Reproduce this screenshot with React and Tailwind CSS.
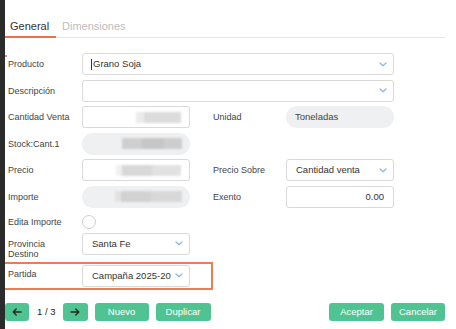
import React from "react";

const font = { fontFamily: '"Liberation Sans", Arial, sans-serif' };

function Chevron() {
  return (
    <svg width="8" height="5" viewBox="0 0 8 5" className="shrink-0">
      <path d="M1 1 L4 3.8 L7 1" fill="none" stroke="#8db4e2" strokeWidth="1.2" strokeLinecap="round" strokeLinejoin="round" />
    </svg>
  );
}

function Blur({ segs }) {
  return (
    <div className="flex h-[11px] blur-[0.8px]">
      {segs.map((c, i) => (
        <div key={i} className="h-full" style={{ width: c[0], background: c[1] }} />
      ))}
    </div>
  );
}

function Label({ children }) {
  return <div className="w-[77px] shrink-0 pl-[3px] text-[9px] text-[#444] leading-[10px]">{children}</div>;
}

function RLabel({ children }) {
  return <div className="w-[96px] shrink-0 pl-[23px] text-[9px] text-[#444] leading-[10px]">{children}</div>;
}

export default function App() {
  return (
    <div className="w-[456px] h-[329px] flex bg-white overflow-hidden" style={font}>
      <div className="w-[5px] shrink-0 bg-[#2b2b2b]" />
      <div className="flex-1 flex flex-col">
        {/* tabs */}
        <div className="mt-[16px] w-[440px] h-[22px] flex border-b border-[#e6e6e6]">
          <div className="w-[51px] pl-[5px] pt-[2px] text-[11px] text-[#333] border-b-2 border-[#ef6f4a] -mb-px">General</div>
          <div className="pl-[6px] pt-[2px] text-[11px] text-[#bdbdbd]">Dimensiones</div>
        </div>

        <div className="flex flex-col mt-[15px] relative">
          <div className="absolute left-0 top-[2px] w-[2px] h-[2px] bg-[#e06060] rounded-full" />
          {/* Producto */}
          <div className="flex items-center h-[22px]">
            <Label>Producto</Label>
            <div className="w-[312px] h-[22px] border border-[#d9d9d9] rounded-[3px] flex items-center pl-[8px] pr-[6px] text-[9.5px] text-[#333]">
              <span className="w-px h-[11px] bg-[#333] mr-px" />
              <span className="flex-1">Grano Soja</span>
              <Chevron />
            </div>
          </div>
          {/* Descripcion */}
          <div className="flex items-center h-[22px] mt-[4.6px]">
            <Label>Descripción</Label>
            <div className="w-[312px] h-[22px] border border-[#d9d9d9] rounded-[3px] flex items-center justify-end pr-[6px]">
              <Chevron />
            </div>
          </div>
          {/* Cantidad */}
          <div className="flex items-center h-[22px] mt-[4.6px]">
            <Label>Cantidad Venta</Label>
            <div className="w-[108px] h-[22px] border border-[#d9d9d9] rounded-[3px] flex items-center justify-end pr-[8px]">
              <Blur segs={[[8, "#ececec"], [37, "#dcdcdc"]]} />
            </div>
            <RLabel>Unidad</RLabel>
            <div className="w-[108px] h-[22px] rounded-[11px] bg-[#eff0f2] flex items-center pl-[9px] text-[9.5px] text-[#444]">Toneladas</div>
          </div>
          {/* Stock */}
          <div className="flex items-center h-[22px] mt-[4.6px]">
            <Label>Stock:Cant.1</Label>
            <div className="w-[108px] h-[22px] rounded-[11px] bg-[#eff0f2] flex items-center justify-end pr-[8px]">
              <Blur segs={[[20, "#cfcfcf"], [22, "#c6c6c6"], [18, "#cdcdcd"]]} />
            </div>
          </div>
          {/* Precio */}
          <div className="flex items-center h-[22px] mt-[4.6px]">
            <Label>Precio</Label>
            <div className="w-[108px] h-[22px] border border-[#d9d9d9] rounded-[3px] flex items-center justify-end pr-[8px]">
              <Blur segs={[[6, "#f0f0f0"], [30, "#d8d8d8"], [29, "#e2e2e2"]]} />
            </div>
            <RLabel>Precio Sobre</RLabel>
            <div className="w-[108px] h-[22px] border border-[#d9d9d9] rounded-[3px] flex items-center pl-[9px] pr-[6px] text-[9.5px] text-[#333]">
              <span className="flex-1">Cantidad venta</span>
              <Chevron />
            </div>
          </div>
          {/* Importe */}
          <div className="flex items-center h-[22px] mt-[4.6px]">
            <Label>Importe</Label>
            <div className="w-[108px] h-[22px] rounded-[11px] bg-[#eff0f2] flex items-center justify-end pr-[8px]">
              <Blur segs={[[6, "#e2e2e2"], [30, "#d2d2d2"], [31, "#d8d8d8"]]} />
            </div>
            <RLabel>Exento</RLabel>
            <div className="w-[108px] h-[22px] border border-[#d9d9d9] rounded-[3px] flex items-center justify-end pr-[9px] text-[9.5px] text-[#333]">0.00</div>
          </div>
          {/* Edita Importe */}
          <div className="flex items-center h-[16px] mt-[6px]">
            <Label>Edita Importe</Label>
            <div className="w-[14px] h-[14px] rounded-full border border-[#cfcfcf] bg-white" />
          </div>
          {/* Provincia */}
          <div className="flex items-start h-[22px] mt-[3px]">
            <Label><div className="pt-[6px]">Provincia<br />Destino</div></Label>
            <div className="w-[108px] h-[22px] border border-[#d9d9d9] rounded-[3px] flex items-center pl-[9px] pr-[6px] text-[9.5px] text-[#333]">
              <span className="flex-1">Santa Fe</span>
              <Chevron />
            </div>
          </div>
          {/* Partida */}
          <div className="flex items-center w-[208px] h-[28px] mt-[7px] border-y-2 border-r-2 border-[#f27a52]">
            <Label><div className="-mt-[3px]">Partida</div></Label>
            <div className="w-[108px] h-[22px] border border-[#d9d9d9] rounded-[3px] flex items-center pl-[9px] pr-[6px] text-[9.5px] text-[#333]">
              <span className="flex-1 whitespace-nowrap">Campaña 2025-20</span>
              <Chevron />
            </div>
          </div>
          {/* Buttons */}
          <div className="flex items-center h-[18px] mt-[13px] w-[440px]">
            <button className="w-[24px] h-[18px] rounded-[3px] bg-[#4fc492] flex items-center justify-center">
              <svg width="10" height="8" viewBox="0 0 10 8"><path d="M9 4 H1.5 M4.2 1 L1.2 4 L4.2 7" fill="none" stroke="#1d2b24" strokeWidth="1.4" strokeLinecap="round" strokeLinejoin="round" /></svg>
            </button>
            <span className="ml-[8px] text-[9.5px] text-[#222]">1 / 3</span>
            <button className="ml-[7px] w-[25px] h-[18px] rounded-[3px] bg-[#4fc492] flex items-center justify-center">
              <svg width="10" height="8" viewBox="0 0 10 8"><path d="M1 4 H8.5 M5.8 1 L8.8 4 L5.8 7" fill="none" stroke="#1d2b24" strokeWidth="1.4" strokeLinecap="round" strokeLinejoin="round" /></svg>
            </button>
            <button className="ml-[7px] w-[54px] h-[18px] rounded-[3px] bg-[#4fc492] text-white text-[9.5px]">Nuevo</button>
            <button className="ml-[7px] w-[55px] h-[18px] rounded-[3px] bg-[#4fc492] text-white text-[9.5px]">Duplicar</button>
            <div className="flex-1" />
            <button className="w-[55px] h-[18px] rounded-[3px] bg-[#4fc492] text-white text-[9.5px]">Aceptar</button>
            <button className="ml-[7px] w-[54px] h-[18px] rounded-[3px] bg-[#4fc492] text-white text-[9.5px]">Cancelar</button>
          </div>
        </div>
      </div>
    </div>
  );
}
